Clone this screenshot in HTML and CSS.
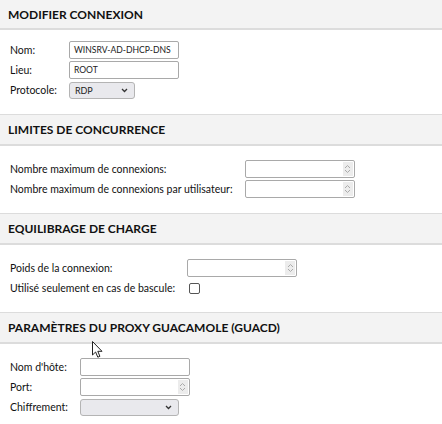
FILE: index.html
```
<!DOCTYPE html>
<html lang="fr">
<head>
<meta charset="utf-8">
<title>Modifier connexion</title>
<link rel="stylesheet" href="styles.css">
</head>
<body>
<div class="page">
  <section class="section first">
    <h2 class="section-header">Modifier connexion</h2>
    <div class="fields">
      <label class="label">Nom:</label>
      <div class="field"><div class="text-input w110">WINSRV-AD-DHCP-DNS</div></div>
      <label class="label">Lieu:</label>
      <div class="field"><div class="text-input w110">ROOT</div></div>
      <label class="label">Protocole:</label>
      <div class="field"><div class="select w66"><span>RDP</span><svg class="chev" width="7" height="5" viewBox="0 0 7 5"><path d="M1 1 L3.5 3.5 L6 1" fill="none" stroke="#333" stroke-width="1.3"/></svg></div></div>
    </div>
  </section>

  <section class="section">
    <h2 class="section-header">Limites de concurrence</h2>
    <div class="fields">
      <label class="label">Nombre maximum de connexions:</label>
      <div class="field"><div class="num-input w110"><span class="num-value"></span><span class="spin"><svg width="7" height="10" viewBox="0 0 7 10"><path d="M1 4 L3.5 1.5 L6 4 M1 6 L3.5 8.5 L6 6" fill="none" stroke="#aaa" stroke-width="1"/></svg></span></div></div>
      <label class="label">Nombre maximum de connexions par utilisateur:</label>
      <div class="field"><div class="num-input w110"><span class="num-value"></span><span class="spin"><svg width="7" height="10" viewBox="0 0 7 10"><path d="M1 4 L3.5 1.5 L6 4 M1 6 L3.5 8.5 L6 6" fill="none" stroke="#aaa" stroke-width="1"/></svg></span></div></div>
    </div>
  </section>

  <section class="section">
    <h2 class="section-header">Equilibrage de charge</h2>
    <div class="fields">
      <label class="label">Poids de la connexion:</label>
      <div class="field"><div class="num-input w110"><span class="num-value"></span><span class="spin"><svg width="7" height="10" viewBox="0 0 7 10"><path d="M1 4 L3.5 1.5 L6 4 M1 6 L3.5 8.5 L6 6" fill="none" stroke="#aaa" stroke-width="1"/></svg></span></div></div>
      <label class="label">Utilisé seulement en cas de bascule:</label>
      <div class="field"><span class="checkbox"></span></div>
    </div>
  </section>

  <section class="section">
    <h2 class="section-header">Paramètres du proxy Guacamole (guacd)</h2>
    <div class="fields">
      <label class="label">Nom d'hôte:</label>
      <div class="field"><div class="text-input w110"></div></div>
      <label class="label">Port:</label>
      <div class="field"><div class="num-input w110"><span class="num-value"></span><span class="spin"><svg width="7" height="10" viewBox="0 0 7 10"><path d="M1 4 L3.5 1.5 L6 4 M1 6 L3.5 8.5 L6 6" fill="none" stroke="#aaa" stroke-width="1"/></svg></span></div></div>
      <label class="label">Chiffrement:</label>
      <div class="field"><div class="select w99"><span></span><svg class="chev" width="7" height="5" viewBox="0 0 7 5"><path d="M1 1 L3.5 3.5 L6 1" fill="none" stroke="#333" stroke-width="1.3"/></svg></div></div>
    </div>
    <svg class="cursor" width="12" height="18" viewBox="0 0 12 18"><path d="M0.5 0.5 L0.5 14 L3.6 11 L5.8 16.2 L7.9 15.3 L5.8 10.3 L10 10.3 Z" fill="#fff" stroke="#222" stroke-width="1" stroke-linejoin="round"/></svg>
  </section>
</div>
</body>
</html>
```

FILE: styles.css
```
* { box-sizing: border-box; }
html, body { margin: 0; padding: 0; background: #fff; }
body {
  font-family: Lato, "Open Sans", sans-serif;
  font-size: 10.5px;
  color: #111;
  width: 442px;
  height: 424px;
  overflow: hidden;
}
.section { position: relative; }
.section-header {
  margin: 0;
  background: #f3f3f3;
  border-top: 1px solid #dcdcdc;
  border-bottom: 2px solid #dcdcdc;
  height: 32px;
  padding-left: 8px;
  display: flex;
  align-items: center;
  font-size: 12px;
  font-weight: 700;
  text-transform: uppercase;
  color: #111;
}
.first .section-header {
  border-top: none;
  height: 30px;
}
.fields {
  display: grid;
  grid-template-columns: max-content max-content;
  column-gap: 12px;
  row-gap: 2px;
  align-items: center;
  padding: 14px 10px 15px;
}
.first .fields { padding-top: 11px; }
.label { line-height: 18px; white-space: nowrap; }
.field { display: flex; align-items: center; height: 18px; }
.w110 { width: 110px; }
.w66 { width: 66px; }
.w99 { width: 99px; }
.text-input, .num-input {
  height: 18px;
  border: 1px solid #a9a9a9;
  border-radius: 2px;
  background: #fff;
  font-size: 8.6px;
  padding: 0 4px;
  display: flex;
  align-items: center;
  color: #222;
  white-space: nowrap;
  overflow: hidden;
}
.num-input { padding-right: 1px; justify-content: space-between; }
.spin {
  width: 10px;
  height: 14px;
  background: #ececec;
  display: flex;
  align-items: center;
  justify-content: center;
}
.select {
  height: 17px;
  border: 1px solid #b4b4b4;
  border-radius: 3px;
  background: #e9e9ed;
  font-size: 9px;
  padding: 0 6px 0 5px;
  display: flex;
  align-items: center;
  justify-content: space-between;
  color: #222;
}
.checkbox {
  width: 11px;
  height: 11px;
  border: 1px solid #555;
  border-radius: 2px;
  background: #fff;
  margin-left: 2px;
}
.cursor {
  position: absolute;
  left: 92px;
  top: 29px;
}
```
